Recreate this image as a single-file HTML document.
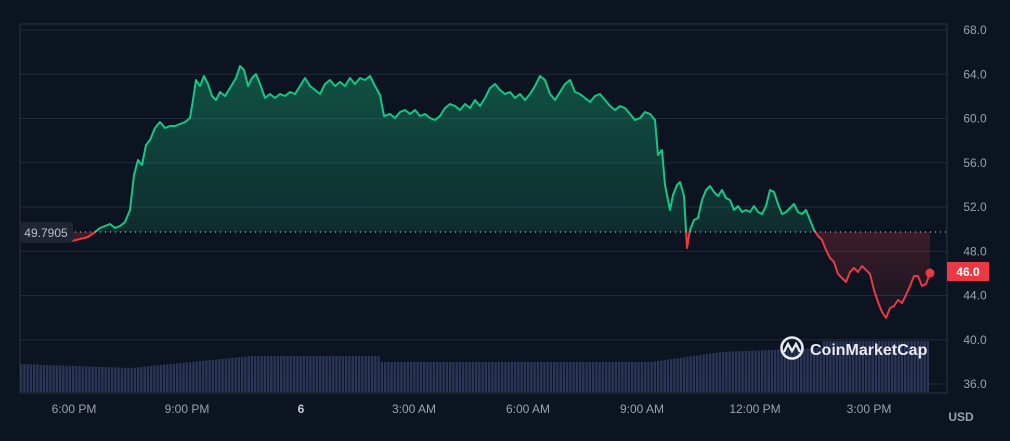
<!DOCTYPE html><html><head><style>
body{margin:0;background:#0d1421;width:1010px;height:441px;overflow:hidden;font-family:"Liberation Sans",sans-serif}
</style></head><body>
<svg id="s" width="1010" height="441" xmlns="http://www.w3.org/2000/svg" style="position:absolute;left:0;top:0">
<defs>
<linearGradient id="gg" x1="0" y1="0" x2="0" y2="1"><stop offset="0" stop-color="#16c784" stop-opacity="0.35"/><stop offset="1" stop-color="#16c784" stop-opacity="0.02"/></linearGradient>
<linearGradient id="rg" x1="0" y1="232" x2="0" y2="320" gradientUnits="userSpaceOnUse"><stop offset="0" stop-color="#ea3943" stop-opacity="0.22"/><stop offset="1" stop-color="#ea3943" stop-opacity="0.02"/></linearGradient>
<clipPath id="top"><rect x="0" y="0" width="1010" height="232"/></clipPath>
<clipPath id="bot"><rect x="0" y="232" width="1010" height="200"/></clipPath>
</defs>
<g id="grid" stroke="#222a3a" stroke-width="1"></g>
<g id="bars" fill="#2b3658"></g>
<g id="area"></g>
<line x1="20" y1="232" x2="947" y2="232" stroke="#aab" stroke-width="1.3" stroke-dasharray="1,4"/>
<rect x="20" y="24" width="927" height="369" fill="none" stroke="#2a3142"/>
<rect x="20" y="222" width="53" height="21" rx="4" fill="#1f2533"/>
<text x="46" y="237" fill="#b9bfca" font-size="12" text-anchor="middle">49.7905</text>
<g id="ylab" fill="#9aa1ae" font-size="12"></g>
<rect x="947" y="262" width="42" height="19" fill="#ea3943"/>
<text x="968" y="276" fill="#fff" font-size="12" font-weight="bold" text-anchor="middle">46.0</text>
<circle cx="930" cy="273" r="4.5" fill="#ea3943"/>
<g fill="#9aa1ae" font-size="12" text-anchor="middle">
<text x="74" y="413">6:00 PM</text><text x="187" y="413">9:00 PM</text><text x="301" y="413" font-weight="bold" fill="#c5cad3">6</text><text x="414" y="413">3:00 AM</text><text x="528" y="413">6:00 AM</text><text x="642" y="413">9:00 AM</text><text x="755" y="413">12:00 PM</text><text x="869" y="413">3:00 PM</text>
</g>
<text x="961" y="421" fill="#9aa1ae" font-size="12" font-weight="bold" text-anchor="middle">USD</text>
<g transform="translate(780,336)" fill="none" stroke="#e8eaee" stroke-width="2.6">
<circle cx="12" cy="12" r="10.5"/>
<path d="M4 16 L8 8 L12 15 L16 8 L20 16" stroke-width="2.4"/>
</g>
<text x="810" y="355" fill="#e8eaee" font-size="16" font-weight="bold">CoinMarketCap</text>
</svg>
<script>
var s='http://www.w3.org/2000/svg';
function el(t,a,p){var e=document.createElementNS(s,t);for(var k in a)e.setAttribute(k,a[k]);document.getElementById(p).appendChild(e);return e;}
var labs=['68.0','64.0','60.0','56.0','52.0','48.0','44.0','40.0','36.0'];
for(var i=0;i<9;i++){var y=30+i*44.25;el('line',{x1:20,y1:y,x2:947,y2:y},'grid');var t=el('text',{x:975,y:y+4,'text-anchor':'middle'},'ylab');t.textContent=labs[i];}
for(var x=20;x<930;x+=3.25){var h;
if(x<130)h=364+(x-20)/110*4;else if(x<250)h=368-(x-130)/120*12;else if(x<380)h=356;else if(x<650)h=362;else if(x<720)h=362-(x-650)/70*10;else if(x<820)h=352-(x-720)/100*4;else h=341;
el('rect',{x:x,y:h,width:2.3,height:392-h},'bars');}
var P=[[72,241],[80,239],[88,237],[95,232],[100,228],[105,226],[110,224],[115,228],[120,226],[125,222],[130,210],[134,175],[138,160],[142,165],[146,145],[150,140],[155,128],[160,122],[165,128],[170,126],[175,126],[180,124],[185,122],[190,118],[193,100],[196,80],[200,86],[204,76],[208,84],[212,96],[216,100],[220,92],[225,96],[230,88],[236,78],[240,66],[244,70],[248,86],[252,78],[256,74],[260,84],[265,98],[270,94],[275,98],[280,94],[285,96],[290,92],[295,94],[300,86],[305,78],[310,86],[315,90],[320,94],[325,84],[330,80],[335,86],[340,82],[345,86],[350,78],[355,84],[360,78],[365,80],[370,76],[375,86],[380,95],[384,116],[390,114],[395,118],[400,112],[405,110],[410,114],[415,110],[420,116],[425,114],[430,118],[435,120],[440,116],[445,108],[450,104],[455,106],[460,110],[465,104],[470,108],[475,100],[480,106],[485,98],[490,88],[495,84],[500,90],[505,94],[510,92],[515,98],[520,94],[525,100],[530,94],[535,86],[540,76],[545,80],[550,94],[555,100],[560,92],[565,84],[570,80],[575,92],[580,94],[585,98],[590,102],[595,96],[600,94],[605,100],[610,106],[615,110],[620,106],[625,108],[630,114],[635,120],[640,118],[645,112],[650,114],[655,120],[658,155],[662,150],[665,185],[670,210],[673,195],[677,185],[680,182],[684,196],[687,248],[690,230],[694,220],[698,218],[702,200],[706,190],[710,186],[714,192],[718,196],[722,190],[726,198],[730,200],[734,210],[738,206],[742,212],[746,210],[750,212],[754,206],[758,212],[762,214],[766,206],[770,190],[774,192],[778,204],[782,214],[786,212],[790,208],[794,204],[798,212],[802,214],[806,210],[810,220],[814,230],[818,236],[822,240],[826,250],[830,258],[834,262],[838,274],[842,278],[846,282],[850,272],[854,268],[858,272],[862,266],[866,270],[870,274],[874,290],[878,302],[882,312],[886,318],[890,308],[894,306],[898,300],[902,303],[906,295],[910,286],[914,276],[918,276],[922,286],[926,284],[930,273]];
var d='M'+P.map(function(p){return p.join(',')}).join(' L');
var fill=d+' L930,232 L72,232 Z';
el('path',{d:fill,fill:'url(#gg)','clip-path':'url(#top)'},'area');
el('path',{d:fill,fill:'url(#rg)','clip-path':'url(#bot)'},'area');
el('path',{d:d,fill:'none',stroke:'#16c784','stroke-width':2,'stroke-linejoin':'round','clip-path':'url(#top)'},'area');
el('path',{d:d,fill:'none',stroke:'#ea3943','stroke-width':2,'stroke-linejoin':'round','clip-path':'url(#bot)'},'area');
</script>
</body></html>
